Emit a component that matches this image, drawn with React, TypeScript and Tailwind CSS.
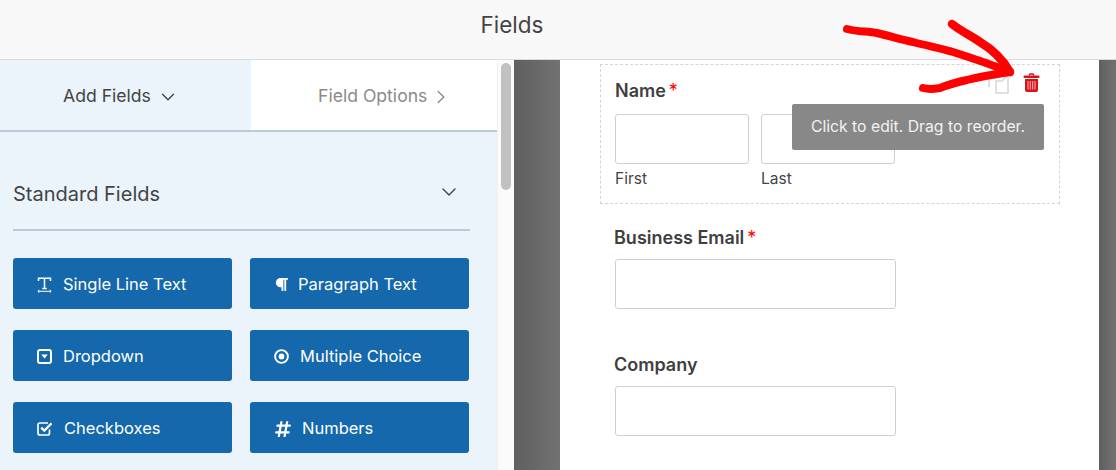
import { ChevronDown, ChevronRight } from "lucide-react";
import { FaHashtag, FaParagraph } from "react-icons/fa";

function TextIcon() {
  return (
    <svg width="15" height="16" viewBox="0 0 15 16" fill="none" stroke="#fff">
      <path d="M1.5 4V1.2h12V4M7.5 1.2V11.5M5.2 11.5h4.6" strokeWidth="1.5" />
      <path d="M1 14.3h13" strokeWidth="1" />
      <path d="M2.4 12.8 0.8 14.3l1.6 1.5M12.6 12.8l1.6 1.5-1.6 1.5" strokeWidth="1" />
    </svg>
  );
}

function DropdownIcon() {
  return (
    <svg width="15" height="15" viewBox="0 0 15 15">
      <rect x="1" y="1" width="13" height="13" rx="2" fill="none" stroke="#fff" strokeWidth="2" />
      <path d="M4.2 5.6h6.6L7.5 9.6z" fill="#fff" />
    </svg>
  );
}

function RadioIcon() {
  return (
    <svg width="15" height="15" viewBox="0 0 15 15">
      <circle cx="7.5" cy="7.5" r="6.4" fill="none" stroke="#fff" strokeWidth="1.9" />
      <circle cx="7.5" cy="7.5" r="2.9" fill="#fff" />
    </svg>
  );
}

function CheckIcon() {
  return (
    <svg width="16" height="15" viewBox="0 0 16 15" fill="none" stroke="#fff">
      <path d="M12.5 8.5V12a2 2 0 0 1-2 2H3a2 2 0 0 1-2-2V4a2 2 0 0 1 2-2h8" strokeWidth="1.7" />
      <path d="M4.2 6.6 7.3 9.6 14.5 2.4" strokeWidth="2.2" />
    </svg>
  );
}

const fields = [
  { label: "Single Line Text", icon: <TextIcon />, gap: "gap-[11px]" },
  { label: "Paragraph Text", icon: <FaParagraph className="size-[15px]" />, gap: "gap-[9px]" },
  { label: "Dropdown", icon: <DropdownIcon />, gap: "gap-[11px]" },
  { label: "Multiple Choice", icon: <RadioIcon />, gap: "gap-[11px]" },
  { label: "Checkboxes", icon: <CheckIcon />, gap: "gap-[11px]" },
  { label: "Numbers", icon: <FaHashtag className="size-[18px]" />, gap: "gap-[10px]" },
];

function Field({ label, required, className }: { label: string; required?: boolean; className: string }) {
  return (
    <div className={className}>
      <div className="pt-px text-[18px] leading-[22px] font-semibold text-[#3f3f3f]">
        {label}
        {required && <span className="ml-[3px] font-normal text-[#ff0000]">*</span>}
      </div>
      <div className="mt-[10px] ml-px h-[50px] w-[281px] rounded-[3px] border border-[#cfcfcf] bg-white" />
    </div>
  );
}

function Annotations() {
  return (
    <svg className="absolute top-0 left-0" width="1116" height="470" fill="none">
      <path
        d="M847 29 C858 32 868 31 877 33 C890 36 902 40 913 42 C928 46 940 48 953 52 C972 58 990 64 1010 72"
        stroke="#ff0000"
        strokeWidth="8"
        strokeLinecap="round"
      />
      <path
        d="M952 24 C962 32 972 36 980 42 C990 48 1002 58 1010 72"
        stroke="#ff0000"
        strokeWidth="8.5"
        strokeLinecap="round"
      />
      <path
        d="M923 88 C930 90 934 89 940 88 C950 84 958 82 967 80 C982 76 996 74 1010 72"
        stroke="#ff0000"
        strokeWidth="8"
        strokeLinecap="round"
      />
    </svg>
  );
}

export default function App() {
  return (
    <div className="relative flex h-[470px] w-[1116px] flex-col overflow-hidden bg-white font-['Inter',sans-serif]">
      <header className="h-[60px] w-full shrink-0 border-b border-[#dcdcdc] bg-[#f8f8f8]">
        <h1 className="w-[1024px] text-center text-[22.5px] leading-[50px] font-normal text-[#444444]">Fields</h1>
      </header>

      <div className="flex min-h-0 flex-1">
        {/* left panel */}
        <aside className="h-full w-[497px] shrink-0 bg-[#ebf3fb]">
          <div className="flex h-[72px] border-b-2 border-[#bccbdb]">
            <div className="flex w-[251px] items-center gap-[6px] pt-[3px] pl-[63px] text-[17.6px] text-[#444444]">
              Add Fields
              <ChevronDown className="size-[22px]" strokeWidth={1.5} />
            </div>
            <div className="flex flex-1 items-center gap-[3px] bg-white pt-[3px] pl-[67px] text-[17.6px] text-[#8a8a8a]">
              Field Options
              <ChevronRight className="size-[22px]" strokeWidth={1.5} />
            </div>
          </div>

          <div className="px-[13px]">
            <div className="flex h-[99px] w-[457px] items-center justify-between border-b-2 border-[#bccbdb] pt-[27px] pr-[9px] text-[20px] text-[#444444]">
              Standard Fields
              <ChevronDown className="mb-[4px] size-[24px]" strokeWidth={1.4} />
            </div>
            <div className="mt-[27px] grid w-[456px] grid-cols-[219px_219px] gap-x-[18px] gap-y-[21px]">
              {fields.map((field) => (
                <div
                  key={field.label}
                  className={`flex h-[51px] items-center rounded-[3px] bg-[#1468ab] pt-[2px] pl-[24px] text-[16.5px] text-white ${field.gap}`}
                >
                  {field.icon}
                  {field.label}
                </div>
              ))}
            </div>
          </div>
        </aside>

        {/* scrollbar */}
        <div className="h-full w-[17px] shrink-0 border-l border-[#efefef] bg-[#fbfbfb] pt-[3px] pl-[3px]">
          <div className="h-[127px] w-[10px] rounded-[5px] bg-[#c1c1c1]" />
        </div>

        {/* form preview */}
        <div className="h-full w-[46px] shrink-0 bg-gradient-to-r from-[#5f5f5f] to-[#727272]" />
        <main className="relative h-full w-[539px] shrink-0 bg-white">
          <div className="mt-[4px] ml-[40px] h-[140px] w-[460px] border border-dashed border-[#d4d4d4] px-[14px] pt-[15px]">
            <div className="text-[18px] leading-[22px] font-semibold text-[#3f3f3f]">
              Name<span className="ml-[3px] font-normal text-[#ff0000]">*</span>
            </div>
            <div className="mt-[12px] flex gap-[12px]">
              <div className="w-[134px]">
                <div className="h-[50px] rounded-[3px] border border-[#cfcfcf]" />
                <div className="mt-[5px] text-[15.5px] leading-[20px] text-[#444444]">First</div>
              </div>
              <div className="w-[134px]">
                <div className="h-[50px] rounded-[3px] border border-[#cfcfcf]" />
                <div className="mt-[5px] text-[15.5px] leading-[20px] text-[#444444]">Last</div>
              </div>
            </div>
          </div>
          <Field label="Business Email" required className="mt-[22px] ml-[54px]" />
          <Field label="Company" className="mt-[44px] ml-[54px]" />
        </main>
        <div className="h-full flex-1 bg-gradient-to-r from-[#5f5f5f] to-[#727272]" />
      </div>

      {/* field actions */}
      <svg className="absolute top-[72px] left-[988px]" width="22" height="22" viewBox="0 0 22 22" fill="none" stroke="#d6d6d6" strokeWidth="1.5">
        <path d="M1 15V6h7l4-4h1" />
        <path d="M8 9h6l6-6v18H8z" fill="#ffffff" />
      </svg>
      <svg className="absolute top-[73px] left-[1023px]" width="17" height="19" viewBox="0 0 17 19">
        <path d="M6 2.5 7 1h3l1 1.5" fill="none" stroke="#d8141a" strokeWidth="1.4" />
        <rect x="0.5" y="2.5" width="16" height="2.6" rx="1" fill="#d8141a" />
        <path d="M2 6h13v11a2 2 0 0 1-2 2H4a2 2 0 0 1-2-2z" fill="#d8141a" />
        <path d="M5 8v8.5M7.3 8v8.5M9.7 8v8.5M12 8v8.5" stroke="#f6c6c6" strokeWidth="0.9" />
      </svg>

      <div className="absolute top-[104px] left-[792px] flex h-[46px] w-[252px] items-center justify-center rounded-[2px] bg-[#888888] text-[15.75px] text-[#f2f2f2]">
        Click to edit. Drag to reorder.
      </div>

      <Annotations />
    </div>
  );
}
